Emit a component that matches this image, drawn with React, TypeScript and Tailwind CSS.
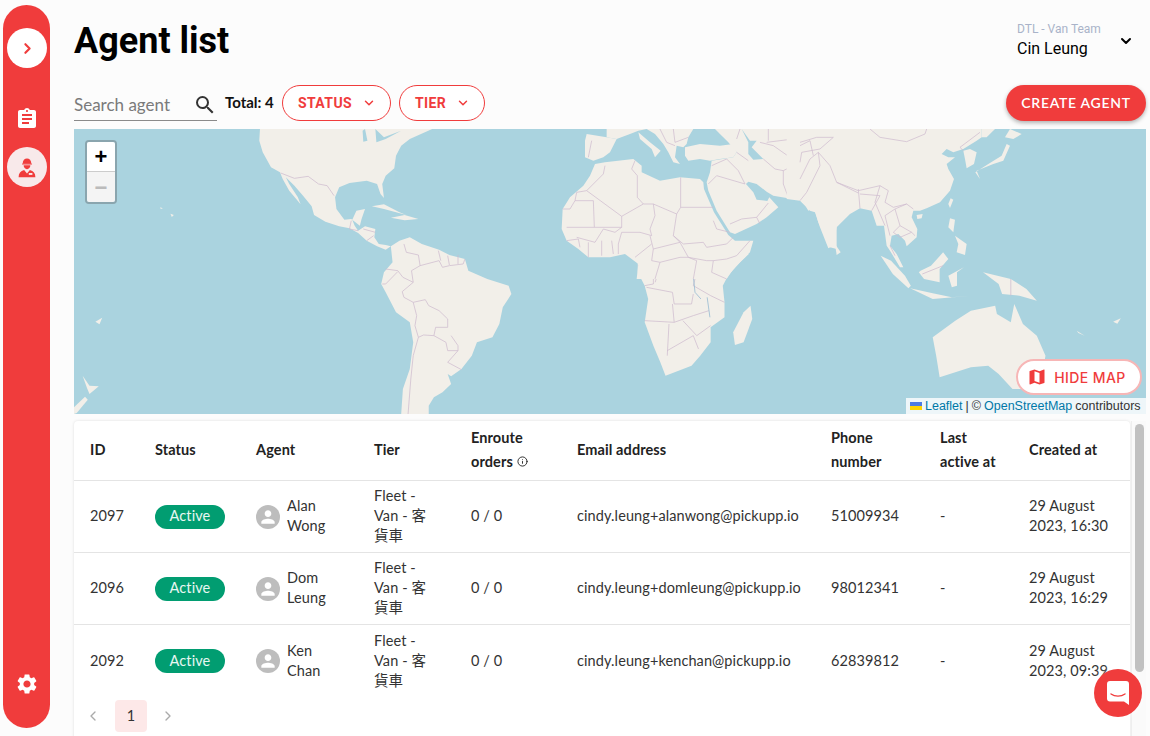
import { ChevronDown, ChevronLeft, ChevronRight, Info } from 'lucide-react';
import { MdAssignment, MdMap, MdPerson, MdSearch, MdSettings } from 'react-icons/md';

const BODY = "font-['Lato','Noto_Sans_CJK_TC',sans-serif]";
const COLS = 'grid grid-cols-[65px_101px_118px_97px_106px_254px_109px_89px_117px] items-center';

const agents = [
  { id: '2097', name: 'Alan Wong', email: 'cindy.leung+alanwong@pickupp.io', phone: '51009934', created: '29 August 2023, 16:30' },
  { id: '2096', name: 'Dom Leung', email: 'cindy.leung+domleung@pickupp.io', phone: '98012341', created: '29 August 2023, 16:29' },
  { id: '2092', name: 'Ken Chan', email: 'cindy.leung+kenchan@pickupp.io', phone: '62839812', created: '29 August 2023, 09:39' },
];

// americas
const westLand = [
  'M540,0 L538,35 L548,70 L572,115 L598,130 L606,150 L625,185 L658,226 L650,205 L625,165 L615,145 L640,170 L665,200 L690,232 L697,258 L730,278 L770,292 L800,298 L825,312 L850,335 L880,352 L905,362 L920,352 L905,348 L885,345 L872,325 L875,300 L845,292 L825,305 L815,290 L808,272 L820,245 L845,240 L835,270 L830,290 L805,270 L785,272 L762,240 L758,205 L770,175 L800,162 L850,155 L880,165 L890,195 L900,207 L895,165 L905,140 L930,118 L935,80 L950,50 L975,30 L1040,0 Z',
  'M920,352 L945,335 L975,325 L1010,345 L1060,362 L1090,378 L1135,390 L1145,425 L1200,450 L1262,470 L1270,495 L1245,535 L1235,585 L1215,625 L1170,640 L1155,680 L1125,720 L1095,742 L1085,735 L1095,765 L1070,790 L1045,805 L1030,830 L1030,855 L950,855 L955,780 L975,720 L985,640 L975,580 L935,550 L905,490 L892,465 L900,430 L925,400 Z',
  'M865,232 L900,226 L945,250 L965,258 L900,240 Z',
  'M920,266 L960,258 L1000,270 L960,274 Z',
  'M25,740 L45,770 L72,772 L45,795 L38,778 Z',
  'M32,803 L40,812 L8,852 L0,855 L0,835 Z',
  'M62,578 L82,566 L74,586 Z',
  'M250,235 L258,238 L252,240 Z M280,254 L290,258 L284,264 Z',
];

const westBorders = [
  'M600,132 L640,148 L680,142 L710,165 L735,170 L755,200',
  'M958,345 L965,370 L1000,378 L1005,410 L980,425 L985,460 L955,445 L940,425 L905,420',
  'M895,465 L905,465 L940,428',
  'M985,460 L953,488 L958,505 L985,520 L1020,512 L1030,530 L1060,545 L1085,570 L1085,595 L1050,595 L1045,620 L1080,640 L1085,665 L1115,665 L1115,650 L1095,620',
  'M1000,625 L985,680 L978,750 L970,855',
  'M985,520 L995,560 L990,590 L1000,625 L1015,618 L1045,620',
  'M1115,665 L1085,700 L1125,722',
  'M1005,410 L1060,395 L1070,415 L1090,410 L1130,405 L1135,390',
  'M1058,365 L1065,395 M1085,380 L1090,408 M1115,378 L1115,405',
  'M805,275 L800,300 L825,305 M840,300 L875,310 M850,335 L870,320',
];

// north africa, europe, middle east
const midLand = [
  'M75,35 L80,15 L140,25 L170,30 L150,70 L130,85 L100,95 L75,85 Z',
  'M140,0 L400,0 L385,25 L380,45 L370,55 L350,50 L345,85 L360,105 L340,100 L325,70 L310,45 L285,15 L260,0 L235,5 L210,15 L170,30 L140,25 Z',
  'M235,10 L270,40 L302,65 L285,85 L275,60 L240,30 Z',
  'M375,55 L420,45 L480,50 L520,45 L530,70 L520,85 L480,90 L450,95 L420,90 L385,95 L375,80 Z',
  'M465,0 L830,0 L830,360 L810,355 L775,280 L762,235 L745,245 L725,210 L680,207 L640,200 L620,188 L590,165 L565,158 L558,165 L580,190 L590,212 L622,216 L628,205 L655,235 L620,265 L590,285 L525,315 L510,310 L470,245 L445,185 L440,160 L450,130 L455,95 L520,85 L530,70 L505,40 L480,15 Z',
  'M105,105 L135,100 L220,90 L245,110 L245,130 L300,155 L360,145 L420,150 L430,160 L432,180 L462,250 L505,318 L525,335 L580,335 L570,370 L520,420 L500,450 L230,450 L235,405 L195,375 L150,385 L85,385 L55,360 L20,335 L5,300 L8,240 L30,205 L70,170 L90,140 Z',
];

const midWater = ['M545,0 L570,35 L590,35 L575,55 L610,90 L580,92 L565,75 L565,40 Z'];

const midBorders = [
  'M80,185 L185,262 L250,225 L232,205 L232,140 L215,120 L225,95',
  'M80,185 L50,190 L45,215 L30,240 L8,240 M45,215 L100,215 L103,295 L20,295',
  'M135,110 L130,135 L80,185 M95,35 L85,85',
  'M103,295 L185,295 M185,262 L185,295 L165,310 L130,300 L105,340 L50,325',
  'M280,225 L285,260 L270,300 L275,320 L240,310 L185,310 L175,345 L175,375',
  'M250,225 L280,225 L350,255 L340,320 L360,340 L280,360 L270,320',
  'M362,145 L362,235 L460,235 M350,255 L362,235',
  'M340,320 L370,345 L430,340 L440,355 L500,345 L520,325',
  'M460,275 L470,300 L510,310',
  'M280,360 L275,395 L300,400 L360,385 L385,385 L410,395',
  'M360,340 L385,385 L440,395 L460,395 L500,390 L530,380 L570,335',
  'M460,395 L455,430 L500,450 M225,385 L275,345',
  'M85,340 L85,385 M125,335 L125,380 M155,335 L160,375 M20,335 L55,330 L60,355',
  'M300,400 L285,450 M410,395 L400,450',
  'M445,165 L470,140 L555,165 M500,90 L535,125 L555,165 M455,110 L500,90 M530,70 L565,95',
  'M610,90 L645,120 L670,125 L670,165 L685,205 M670,125 L760,80 L745,125 L770,130 L745,185 L725,210',
  'M600,40 L640,50 L690,85 M540,0 L530,30 M625,0 L625,35 M620,40 L700,30 L745,50 L810,60 M690,0 L740,50',
  'M510,285 L545,270 L590,265 L600,285 M590,265 L625,222',
  'M300,0 L320,40 L345,50 M340,0 L345,40 L385,25',
];

// east asia
const asiaLand = [
  'M-40,0 L545,0 L545,25 L530,35 L490,60 L460,70 L440,60 L425,75 L445,85 L465,85 L440,105 L445,120 L462,150 L450,185 L420,220 L380,238 L360,245 L340,245 L335,265 L352,300 L350,325 L320,352 L315,335 L295,315 L275,320 L270,350 L290,375 L310,415 L300,415 L270,365 L260,350 L252,290 L230,290 L215,245 L180,238 L150,255 L110,295 L100,350 L85,358 L60,295 L45,250 L30,245 L0,215 L-40,210 Z',
  'M490,65 L510,60 L530,70 L522,105 L500,118 L495,90 Z',
  'M545,0 L585,0 L560,25 L545,25 Z',
  'M530,125 L580,105 L610,95 L630,50 L620,45 L605,80 L565,105 L526,130 L540,150 Z',
  'M615,25 L630,0 L665,15 L640,30 Z',
  'M452,208 L460,212 L450,237 L445,225 Z',
  'M350,258 L368,255 L365,268 L352,270 Z',
  'M105,345 L122,370 L110,378 Z',
  'M450,268 L465,272 L460,310 L445,295 Z',
  'M465,320 L500,345 L495,378 L470,370 L475,345 Z',
];

const asiaBorders = [
  'M0,50 L30,35 L40,80 M210,0 L240,25 L320,38 L375,15 L380,0 M540,10 L480,55 L490,65',
  'M55,70 L90,110 L110,160 L175,185 L240,170 L265,185 L255,220 L280,235 L320,225 L340,240',
  'M55,70 L60,110 L40,150 L20,190 L0,215 M110,160 L175,192 M175,180 L180,238',
  'M180,195 L240,200 L215,245 M240,170 L225,220 L255,290',
  'M255,260 L285,240 L300,290 L335,310 L345,320 M255,260 L270,320 M285,240 L320,225',
  'M300,290 L280,310 L300,325 L335,310 M270,350 L285,380',
  'M0,40 L50,25 L100,25 L60,60 L5,70 L0,100 M0,150 L30,90 L55,70',
];

// southern half
const eastLand = [
  'M50,375 L400,375 L375,400 L340,440 L325,470 L330,520 L330,565 L290,595 L290,640 L260,680 L235,710 L160,740 L145,700 L125,650 L100,580 L110,510 L100,470 L80,430 L80,400 Z',
  'M405,530 L410,570 L385,640 L360,648 L355,610 L385,550 Z',
  'M780,380 L810,395 L850,440 L867,470 L860,478 L815,435 Z',
  'M865,478 L930,493 L985,505 L1040,500 L930,510 Z',
  'M895,425 L925,410 L960,370 L975,390 L950,420 L950,460 L905,450 L890,430 Z',
  'M975,440 L1020,415 L1000,430 L1000,470 L985,475 Z',
  'M1075,430 L1155,450 L1200,480 L1230,515 L1180,500 L1130,495 L1120,465 Z',
  'M930,625 L995,575 L1040,545 L1110,530 L1115,555 L1155,580 L1165,525 L1190,585 L1230,620 L1255,680 L1245,740 L1200,780 L1160,780 L1120,735 L1090,710 L1040,715 L950,745 L940,680 Z',
  'M1345,605 L1368,620 L1350,612 Z',
  'M1450,578 L1472,568 L1462,584 Z',
];

const eastBorders = [
  'M80,410 L125,405 L125,465 L100,470 M150,395 L130,460 M150,395 L240,395 L250,430 L240,470 M335,400 L340,440 M280,400 L335,400',
  'M105,475 L180,490 L185,525 L235,525 L240,495 M240,470 L290,500 L330,520',
  'M180,525 L185,580 L100,575 M185,580 L240,560 L285,545 M170,585 L165,680 M165,665 L240,620 L255,660 M210,575 L250,620 L290,590',
  'M1155,450 L1155,500 M900,435 L960,410',
];

function Shapes({ land, lines, water = [], weight }: { land: string[]; lines: string[]; water?: string[]; weight: string }) {
  return (
    <>
      {land.map((d) => (
        <path key={d} d={d} fill="#f2efe9" />
      ))}
      {water.map((d) => (
        <path key={d} d={d} fill="#aad3df" />
      ))}
      {lines.map((d) => (
        <path key={d} d={d} fill="none" stroke="#cfbccf" strokeWidth={weight} strokeLinejoin="round" />
      ))}
    </>
  );
}

function WorldMap() {
  return (
    <svg viewBox="0 0 1072 285" className="block h-[285px] w-[1072px] bg-[#aad3df]">
      <g transform="scale(0.3444 0.3333)">
        <Shapes land={westLand} lines={westBorders} weight="2.2" />
        <path d="M845,0 L852,35 L840,38 L838,5 Z M875,0 L900,25 L950,5 L905,30 L878,40 Z" fill="#aad3df" />
      </g>
      <g transform="translate(536 0) scale(0.347 0.3333)">
        <Shapes land={eastLand} lines={eastBorders} weight="2.2" />
        <path d="M262,428 L278,426 L276,448 L262,448 Z" fill="#8fb9d6" />
        <path d="M240,440 L245,490 L262,510 M280,505 L288,565" fill="none" stroke="#8fb6d0" strokeWidth="2.2" />
      </g>
      <g transform="translate(486 0) scale(0.3333)">
        <Shapes land={midLand} lines={midBorders} water={midWater} weight="2.2" />
      </g>
      <g transform="translate(726 0) scale(0.3333)">
        <Shapes land={asiaLand} lines={asiaBorders} weight="2.2" />
      </g>
    </svg>
  );
}

function WorkerIcon() {
  return (
    <svg viewBox="0 0 20 20" className="h-[24px] w-[24px] fill-[#f03c3c]">
      <path d="M6.400 7.200C6.400 4.600 8 3 10 3s3.600 1.600 3.600 4.200H6.400Z" />
      <rect x="5.800" y="7" width="8.400" height="1" rx="0.500" />
      <path d="M7.200 8.600h5.600c0 2-1.200 3.200-2.800 3.200S7.200 10.600 7.200 8.600Z" />
      <path d="M3 18.500c0-3.400 1.600-5.300 4.600-6l2.400 3 2.400-3c3 .7 4.600 2.600 4.600 6H3Z" />
      <rect x="11.500" y="15" width="3" height="1.600" fill="#f8e9ea" />
    </svg>
  );
}

function Sidebar() {
  return (
    <aside className="ml-[3px] mt-[5px] flex h-[723px] w-[47px] shrink-0 flex-col items-center rounded-full bg-[#f03c3c] pt-[23px]">
      <div className="flex h-[40px] w-[40px] items-center justify-center rounded-full bg-white">
        <ChevronRight className="ml-[1px] h-[17px] w-[17px] text-[#f03c3c]" strokeWidth={3} />
      </div>
      <MdAssignment className="mt-[39px] h-[24px] w-[24px] text-white" />
      <div className="mt-[16px] flex h-[40px] w-[40px] items-center justify-center rounded-full bg-[#f8e9ea]">
        <WorkerIcon />
      </div>
      <MdSettings className="mb-[32px] mt-auto h-[24px] w-[24px] text-white" />
    </aside>
  );
}

function TopBar() {
  return (
    <header className="flex h-[85px] items-start justify-between">
      <h1 className="mt-[17px] font-['Roboto',sans-serif] text-[36px] font-bold leading-[48px] text-black">Agent list</h1>
      <div className="mr-[12px] mt-[22px] flex items-center font-['Roboto',sans-serif]">
        <div className="w-[101px]">
          <div className="text-[12px] leading-[14px] text-[#a9b3c9]">DTL - Van Team</div>
          <div className="mt-[3px] text-[16px] leading-[20px] text-black">Cin Leung</div>
        </div>
        <ChevronDown className="h-[16px] w-[16px] text-black" strokeWidth={3} />
      </div>
    </header>
  );
}

function Filter({ label, width }: { label: string; width: string }) {
  return (
    <button className={`flex h-[36px] ${width} items-center justify-between rounded-full border border-[#f03c3c] bg-white pl-[15px] pr-[14px] font-['Roboto',sans-serif] text-[14px] font-bold tracking-[0.4px] text-[#f03c3c]`}>
      {label}
      <ChevronDown className="h-[14px] w-[14px]" strokeWidth={2.5} />
    </button>
  );
}

function FilterBar() {
  return (
    <div className="flex h-[36px] items-center">
      <div className={`flex h-[36px] w-[143px] items-center justify-between border-b border-[#8a8a8a] pt-[5px] ${BODY} text-[17px] text-[#7a7a7a]`}>
        Search agent
        <MdSearch className="h-[24px] w-[24px] text-[#333]" />
      </div>
      <span className={`mb-[2px] ml-[8px] w-[57px] whitespace-nowrap ${BODY} text-[15px] font-bold text-[#111]`}>Total: 4</span>
      <Filter label="STATUS" width="w-[109px]" />
      <div className="w-[8px]" />
      <Filter label="TIER" width="w-[86px]" />
      <button className={`ml-auto h-[36px] w-[140px] rounded-full bg-[#f03c3c] pb-[2px] ${BODY} text-[14px] font-semibold tracking-[0.7px] text-white shadow-[0_2px_4px_rgba(0,0,0,0.3)]`}>
        CREATE AGENT
      </button>
    </div>
  );
}

function MapPanel() {
  return (
    <section className="relative mt-[8px] h-[285px] w-[1072px] overflow-hidden">
      <WorldMap />
      <div className="absolute left-[11px] top-[11px] w-[32px] overflow-hidden rounded-[4px] border-2 border-[#8aa5ae] font-['Liberation_Sans',sans-serif]">
        <div className="flex h-[30px] items-center justify-center border-b border-[#ccc] bg-white text-[22px] font-bold text-black">+</div>
        <div className="flex h-[30px] items-center justify-center bg-[#f4f4f4] text-[22px] font-bold text-[#bbb]">−</div>
      </div>
      <button className="absolute bottom-[19px] right-[4px] flex h-[36px] w-[126px] items-center justify-center gap-[7px] rounded-full border-2 border-[#f7b6b6] bg-white pr-[5px] font-['Inter',sans-serif] text-[14px] font-medium tracking-[0.4px] text-[#f03c3c]">
        <MdMap className="h-[20px] w-[20px]" />
        HIDE MAP
      </button>
      <div className="absolute bottom-0 right-0 flex h-[16px] w-[240px] items-center whitespace-nowrap bg-white/80 pl-[4px] font-['Liberation_Sans',sans-serif] text-[12.5px] text-[#333]">
        <svg viewBox="0 0 12 8" className="mr-[3px] h-[8px] w-[12px]">
          <rect width="12" height="4" fill="#4c7be1" />
          <rect y="4" width="12" height="4" fill="#ffd500" />
        </svg>
        <span className="text-[#0078a8]">Leaflet</span>
        <span className="mx-[3px]">|</span>© <span className="mx-[3px] text-[#0078a8]">OpenStreetMap</span> contributors
      </div>
    </section>
  );
}

function Head({ children }: { children: React.ReactNode }) {
  return <div className="px-[16px] font-bold text-[#222]">{children}</div>;
}

function Row({ id, name, email, phone, created }: (typeof agents)[number]) {
  return (
    <div className={`${COLS} h-[72px] border-b border-[#e4e4e4] pb-[1px] text-[#333] last-of-type:border-b-0`}>
      <div className="px-[16px]">{id}</div>
      <div className="px-[16px]">
        <span className="mt-[1px] flex h-[24px] w-[70px] items-center justify-center rounded-full bg-[#019d71] pb-[1px] text-[#e8f7f1]">Active</span>
      </div>
      <div className="flex items-center gap-[7px] px-[16px]">
        <span className="mt-[1px] flex h-[24px] w-[24px] shrink-0 items-center justify-center rounded-full bg-[#bdbdbd]">
          <MdPerson className="h-[20px] w-[20px] text-white" />
        </span>
        <span>{name}</span>
      </div>
      <div className="pl-[16px] pr-[22px]">Fleet - Van - 客貨車</div>
      <div className="px-[16px]">0 / 0</div>
      <div className="whitespace-nowrap px-[16px]">{email}</div>
      <div className="px-[16px]">{phone}</div>
      <div className="px-[16px]">-</div>
      <div className="px-[16px]">{created}</div>
    </div>
  );
}

function AgentTable() {
  return (
    <div className={`mt-[7px] flex h-[315px] ${BODY} text-[14.5px] leading-[20px] tracking-[0.1px]`}>
      <section className="h-[330px] w-[1056px] rounded-[4px] bg-white shadow-[0_0_3px_rgba(0,0,0,0.12)]">
        <div className={`${COLS} h-[60px] border-b border-[#e4e4e4] pb-[2px] leading-[24px]`}>
          <Head>ID</Head>
          <Head>Status</Head>
          <Head>Agent</Head>
          <Head>Tier</Head>
          <Head>
            Enroute orders <Info className="mb-[2px] inline h-[11px] w-[11px]" />
          </Head>
          <Head>Email address</Head>
          <Head>Phone number</Head>
          <Head>Last active at</Head>
          <Head>Created at</Head>
        </div>
        <div>
          {agents.map((a) => (
            <Row key={a.id} {...a} />
          ))}
        </div>
        <div className="mt-[3px] flex items-center pl-[11px] text-[#333]">
          <ChevronLeft className="h-[16px] w-[16px] text-[#aaa]" />
          <span className="ml-[14px] flex h-[32px] w-[32px] items-center justify-center rounded-[4px] bg-[#fde8e8]">1</span>
          <ChevronRight className="ml-[13px] h-[16px] w-[16px] text-[#aaa]" />
        </div>
      </section>
      <div className="ml-[1px] h-[330px] w-[15px] border-l border-[#eee] bg-[#fafafa] pl-[3px] pt-[3px]">
        <div className="h-[248px] w-[9px] rounded-full bg-[#c1c1c1]" />
      </div>
    </div>
  );
}

function ChatBubble() {
  return (
    <button className="absolute bottom-[19px] right-[8px] flex h-[48px] w-[48px] items-center justify-center rounded-full bg-[#f03c3c] shadow-[0_1px_10px_rgba(255,255,255,0.6)]">
      <svg viewBox="0 0 22 24" className="h-[24px] w-[22px]">
        <path d="M3 0h16a3 3 0 0 1 3 3v21l-5-3.500H3a3 3 0 0 1-3-3V3a3 3 0 0 1 3-3Z" fill="#fff" />
        <path d="M4 13c4 2.800 10 2.800 14 0" fill="none" stroke="#f03c3c" strokeWidth="1.400" strokeLinecap="round" />
      </svg>
    </button>
  );
}

export default function App() {
  return (
    <div className="relative flex h-[736px] w-[1150px] overflow-hidden bg-[#fcfcfc]">
      <Sidebar />
      <main className="ml-[24px] w-[1072px]">
        <TopBar />
        <FilterBar />
        <MapPanel />
        <AgentTable />
      </main>
      <ChatBubble />
    </div>
  );
}
